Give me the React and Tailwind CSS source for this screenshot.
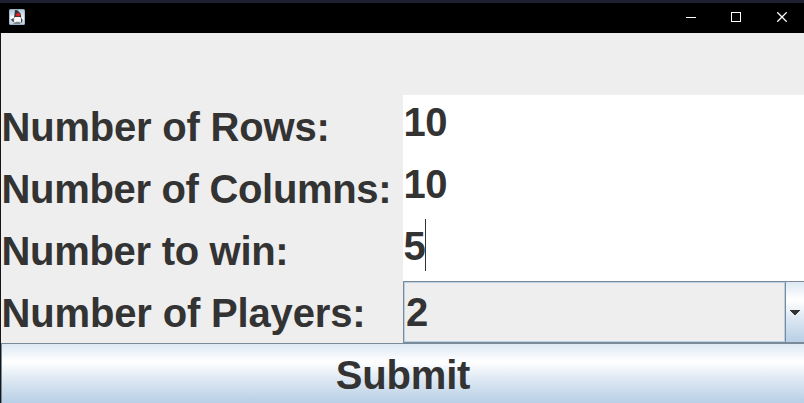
const rows = [
  { label: "Number of Rows:", value: "10", tracking: "tracking-[-0.2px]" },
  { label: "Number of Columns:", value: "10", tracking: "tracking-[-0.32px]" },
  { label: "Number to win:", value: "5", focused: true, tracking: "tracking-[-0.3px]" },
];

function DukeIcon() {
  return (
    <svg className="ml-[9px]" width="16" height="16" viewBox="0 0 16 16">
      <defs>
        <linearGradient id="tile" x1="0" y1="0" x2="0" y2="1">
          <stop offset="0" stopColor="#b4c8da" />
          <stop offset="0.45" stopColor="#e3ebf2" />
          <stop offset="1" stopColor="#c3d2e0" />
        </linearGradient>
      </defs>
      <rect width="16" height="16" rx="1.5" fill="#8fa9c2" />
      <rect x="0.7" y="0.7" width="14.6" height="14.6" rx="1" fill="url(#tile)" />
      <path d="M6 1 L8.5 1.2 L11.5 4.5 L12.5 9 L5 9 L5.5 5 Z" fill="#34383c" />
      <path d="M1.5 8 L4.5 6.5 L4.5 10.5 L2.5 11 Z M12.5 7.5 L14.8 9 L14 12.5 L12.5 11 Z" fill="#fff" />
      <path d="M2 10.5 L4.6 9 L5 13 L3.5 12.5 Z M12 9 L13.6 10.5 L13 14 L12 13 Z" fill="#3f4448" />
      <path d="M5.5 8 L11.5 8 L12 13 L9 12.2 L5.5 13.5 Z" fill="#fafafa" />
      <path d="M4 14 L8 12.8 L12 13.5 L11 15 L5 15 Z" fill="#7f878e" />
      <ellipse cx="9" cy="5.8" rx="2.1" ry="1.8" fill="#e82020" />
    </svg>
  );
}

function TitleBar() {
  return (
    <header className="flex h-[33px] items-start justify-between border-t-3 border-[#1c2030] bg-black pt-[6px]">
      <DukeIcon />
      <div className="mt-[3px] mr-[16px] flex gap-[35px]">
        <svg width="10" height="10" shapeRendering="crispEdges">
          <rect y="5" width="10" height="1" fill="#fff" />
        </svg>
        <svg width="10" height="10" shapeRendering="crispEdges">
          <rect x="0.5" y="0.5" width="9" height="9" fill="none" stroke="#fff" />
        </svg>
        <svg className="ml-px" width="11" height="10">
          <path d="M0.3 0.3 L9.7 9.7 M9.7 0.3 L0.3 9.7" stroke="#fff" strokeWidth="1.3" />
        </svg>
      </div>
    </header>
  );
}

export default function App() {
  return (
    <div className="flex h-[403px] w-[804px] flex-col overflow-hidden bg-[#eeeeee] font-['Liberation_Sans',Arial,sans-serif] text-[40px] leading-[46px] font-bold text-[#333333]">
      <TitleBar />
      <main className="flex flex-1 flex-col border-l border-[#16161a]">
        <div className="h-[62px]" />
        {rows.map((row) => (
          <div key={row.label} className="flex h-[62px]">
            <label className={`w-[402px] pt-[9px] pl-[0.5px] whitespace-nowrap ${row.tracking}`}>
              {row.label}
            </label>
            <div className="flex flex-1 bg-white">
              <span className="pt-1 pl-[0.6px] tracking-[-0.6px]">{row.value}</span>
              {row.focused && <span className="h-[52px] w-px bg-[#333333]" />}
            </div>
          </div>
        ))}
        <div className="flex h-[62px]">
          <label className="w-[402px] pt-[9px] pl-[0.5px] tracking-[-0.16px] whitespace-nowrap">
            Number of Players:
          </label>
          <div className="flex flex-1 border-y border-l border-[#7a8a99]">
            <div className="flex-1 border border-[#b8cfe5] pt-[6px] pl-[1px]">2</div>
            <div className="flex w-[19px] items-center justify-center border-l border-[#7a8a99] bg-[linear-gradient(to_bottom,#dde8f3_0%,#ffffff_30%,#dde8f3_60%,#b8cfe5_100%)]">
              <svg width="10" height="5" shapeRendering="crispEdges">
                <path d="M0 0 H10 V1 H9 V2 H8 V3 H7 V4 H6 V5 H4 V4 H3 V3 H2 V2 H1 V1 H0 Z" fill="#333" />
              </svg>
            </div>
          </div>
        </div>
        <button className="h-[60px] border-t border-l border-[#7a8a99] bg-[linear-gradient(to_bottom,#dde8f3_0%,#ffffff_30%,#dde8f3_60%,#b8cfe5_100%)] pt-[3px] tracking-[-0.2px]">
          Submit
        </button>
      </main>
    </div>
  );
}
